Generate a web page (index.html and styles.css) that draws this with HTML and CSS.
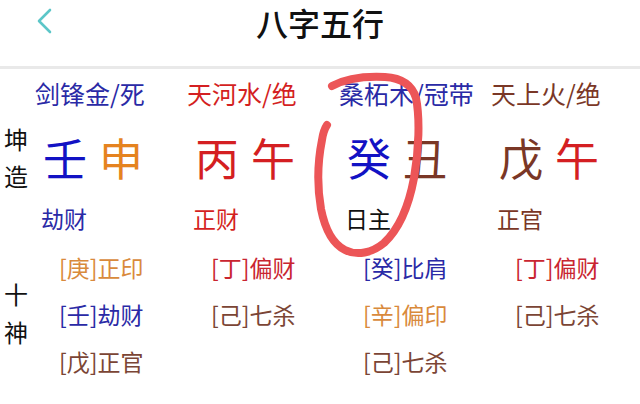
FILE: index.html
```html
<!DOCTYPE html>
<html lang="zh">
<head>
<meta charset="utf-8">
<title>八字五行</title>
<link rel="stylesheet" href="styles.css">
</head>
<body>
<div class="page">
  <header class="topbar">
    <svg class="back" viewBox="0 0 16 26" width="16" height="26"><polyline points="14,2 3,13 14,24" fill="none" stroke="#5cc6c8" stroke-width="2.6" stroke-linecap="round" stroke-linejoin="round"/></svg>
    <h1 class="title">八字五行</h1>
  </header>

  <section class="pillars">
    <div class="nayin-row">
      <div class="side"></div>
      <div class="col nayin blue">剑锋金/死</div>
      <div class="col nayin red">天河水/绝</div>
      <div class="col nayin blue">桑柘木/冠带</div>
      <div class="col nayin brown">天上火/绝</div>
    </div>
    <div class="char-row">
      <div class="side"><span>坤</span><span>造</span></div>
      <div class="col chars"><span class="bright-blue">壬</span><span class="orange">申</span></div>
      <div class="col chars"><span class="red">丙</span><span class="red">午</span></div>
      <div class="col chars"><span class="bright-blue">癸</span><span class="brown">丑</span></div>
      <div class="col chars"><span class="brown">戊</span><span class="red">午</span></div>
    </div>
    <div class="god-row">
      <div class="side"></div>
      <div class="col god blue">劫财</div>
      <div class="col god red">正财</div>
      <div class="col god black">日主</div>
      <div class="col god brown">正官</div>
    </div>
  </section>

  <section class="hidden">
    <div class="side"><span>十</span><span>神</span></div>
    <div class="col stems">
      <div class="stem orange-l">[庚]正印</div>
      <div class="stem blue">[壬]劫财</div>
      <div class="stem brown-l">[戊]正官</div>
    </div>
    <div class="col stems">
      <div class="stem red-l">[丁]偏财</div>
      <div class="stem brown-l">[己]七杀</div>
    </div>
    <div class="col stems">
      <div class="stem blue">[癸]比肩</div>
      <div class="stem orange-l">[辛]偏印</div>
      <div class="stem brown-l">[己]七杀</div>
    </div>
    <div class="col stems">
      <div class="stem red-l">[丁]偏财</div>
      <div class="stem brown-l">[己]七杀</div>
    </div>
  </section>

  <svg class="scribble" viewBox="0 0 640 404" width="640" height="404">
    <path d="M332 86 C345 79 365 76 385 77 C402 78 412 85 416 98 C420 118 419 150 414 178 C409 205 399 229 384 243 C372 253 357 256 345 250 C333 244 325 229 321 209 C317 186 318 160 322 140 C323 133 325 128 327 125" fill="none" stroke="#ec5557" stroke-width="8" stroke-linecap="round" stroke-linejoin="round"/>
  </svg>
</div>
</body>
</html>
```

FILE: styles.css
```css
* { box-sizing: border-box; margin: 0; padding: 0; }
html, body { background: #fff; }
body {
  margin: 0;
  font-family: "Noto Sans CJK SC", "Noto Sans", sans-serif;
  color: #111;
}
.page {
  position: relative;
  width: 640px;
  height: 404px;
  overflow: hidden;
}
.topbar {
  position: relative;
  height: 69px;
  border-bottom: 3px solid #e9e9e9;
  display: flex;
  align-items: flex-start;
  justify-content: center;
}
.back {
  position: absolute;
  left: 36px;
  top: 8px;
}
.title {
  font-size: 32px;
  font-weight: 500;
  line-height: 44px;
  color: #111;
  letter-spacing: 0;
}

.nayin-row, .char-row, .god-row, .hidden {
  display: grid;
  grid-template-columns: 35px 152px 152px 152px 152px;
}
.nayin-row { height: 48px; align-items: center; }
.nayin { font-size: 25px; line-height: 48px; }
.char-row { height: 80px; align-items: center; }
.chars {
  display: flex;
  gap: 12px;
  padding-left: 8px;
  font-size: 44px;
  line-height: 80px;
}
.god-row { height: 42px; align-items: center; }
.god { font-size: 23px; line-height: 42px; padding-left: 6px; }

.side {
  display: flex;
  flex-direction: column;
  align-items: flex-start;
  padding-left: 4px;
  font-size: 24px;
  line-height: 37px;
  color: #111;
}

.hidden {
  margin-top: 5px;
  align-items: start;
}
.hidden .side {
  align-self: start;
  padding-top: 31px;
  line-height: 38px;
}
.stems { padding-left: 24px; }
.stem { font-size: 23px; line-height: 47px; }

.blue { color: #2a2aa6; }
.bright-blue { color: #1212c4; }
.red { color: #d41f22; }
.brown { color: #7a3726; }
.orange { color: #e5831f; }
.black { color: #111; }
.orange-l { color: #d98a3c; }
.red-l { color: #c92530; }
.brown-l { color: #7b4535; }

.scribble {
  position: absolute;
  left: 0;
  top: 0;
  pointer-events: none;
}
```
